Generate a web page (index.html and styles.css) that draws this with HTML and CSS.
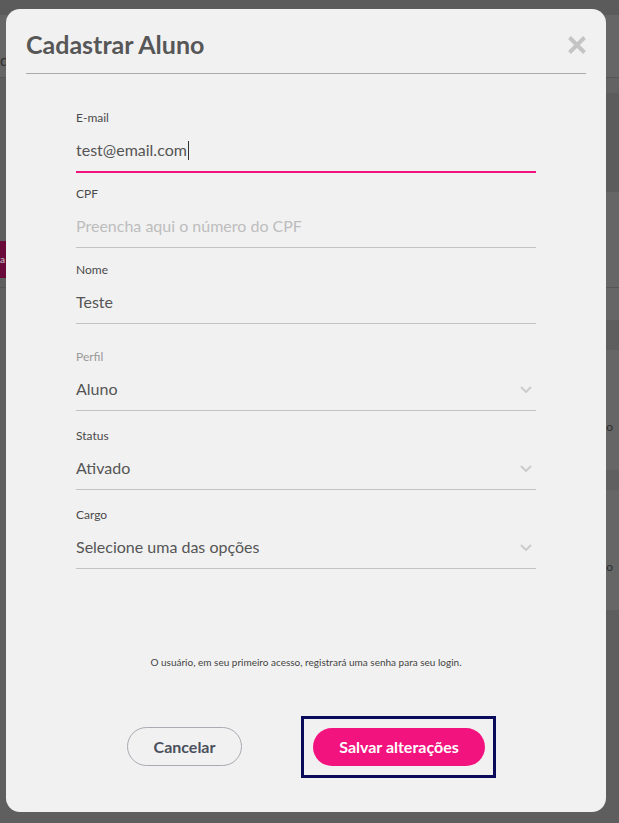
FILE: index.html
```html
<!DOCTYPE html>
<html lang="pt-BR">
<head>
<meta charset="utf-8">
<title>Cadastrar Aluno</title>
<link rel="stylesheet" href="styles.css">
</head>
<body>
<div class="page">
  <div class="col col-left">
    <div class="band b-top-l"></div>
    <div class="band b-head"><span class="cut-d">d</span></div>
    <div class="band b-dim-l"></div>
    <div class="band b-maroon"><span class="maroon-btn">a</span></div>
    <div class="band b-gap-l"></div>
    <div class="band b-rest-l"></div>
  </div>
  <div class="col col-right">
    <div class="band b-top-r"></div>
    <div class="band b-head"></div>
    <div class="band b-sub"></div>
    <div class="band b-dark"></div>
    <div class="band b-light"></div>
    <div class="band b-light2"></div>
    <div class="band b-dim"></div>
    <div class="band b-row"><span class="row-text">Acesso</span></div>
    <div class="band b-sep"></div>
    <div class="band b-row"><span class="row-text">Acesso</span></div>
    <div class="band b-rest-r"></div>
  </div>
</div>

<div class="modal">
  <div class="modal-header">
    <h1 class="modal-title">Cadastrar Aluno</h1>
    <button class="close-btn" aria-label="Fechar">
      <svg width="18" height="18" viewBox="0 0 18 18"><path d="M1.5 1.5 L16.5 16.5 M16.5 1.5 L1.5 16.5" stroke="#c4c4c4" stroke-width="4" fill="none"/></svg>
    </button>
  </div>

  <form class="form">
    <div class="input-group">
      <div class="field focused">
        <label class="label">E-mail</label>
        <div class="control"><span class="value">test@email.com</span><span class="caret"></span></div>
      </div>
      <div class="field">
        <label class="label">CPF</label>
        <div class="control"><span class="placeholder">Preencha aqui o número do CPF</span></div>
      </div>
      <div class="field">
        <label class="label">Nome</label>
        <div class="control"><span class="value">Teste</span></div>
      </div>
    </div>

    <div class="select-group">
      <div class="field">
        <label class="label label-muted">Perfil</label>
        <div class="control select"><span class="value">Aluno</span>
          <svg class="chevron" width="12" height="7" viewBox="0 0 12 7"><path d="M1 1 L6 6 L11 1" stroke="#cccccc" stroke-width="2" fill="none"/></svg>
        </div>
      </div>
      <div class="field">
        <label class="label">Status</label>
        <div class="control select"><span class="value">Ativado</span>
          <svg class="chevron" width="12" height="7" viewBox="0 0 12 7"><path d="M1 1 L6 6 L11 1" stroke="#cccccc" stroke-width="2" fill="none"/></svg>
        </div>
      </div>
      <div class="field">
        <label class="label">Cargo</label>
        <div class="control select"><span class="value">Selecione uma das opções</span>
          <svg class="chevron" width="12" height="7" viewBox="0 0 12 7"><path d="M1 1 L6 6 L11 1" stroke="#cccccc" stroke-width="2" fill="none"/></svg>
        </div>
      </div>
    </div>

    <p class="info">O usuário, em seu primeiro acesso, registrará uma senha para seu login.</p>

    <div class="actions">
      <button type="button" class="btn btn-outline">Cancelar</button>
      <span class="focus-ring"><button type="button" class="btn btn-primary">Salvar alterações</button></span>
    </div>
  </form>
</div>
</body>
</html>
```
FILE: styles.css
```css
* { box-sizing: border-box; }
html, body { margin: 0; padding: 0; }
body {
  width: 619px;
  height: 823px;
  overflow: hidden;
  background: #5e5e5e;
  font-family: Lato, "Liberation Sans", sans-serif;
  position: relative;
}

/* dimmed page behind the modal */
.page { display: flex; height: 823px; }
.col { display: flex; flex-direction: column; }
.col-left { width: 40px; }
.col-right { flex: 1; }
.band { flex: none; overflow: hidden; }
.b-top-l, .b-top-r { height: 15px; background: #5b5b5b; }
.b-head { height: 63px; background: #666; border-bottom: 1px solid #555; padding-top: 36px; }
.cut-d { display: block; font-size: 15px; color: #2f2f2f; line-height: 18px; }
.b-dim-l { height: 163px; background: #5e5e5e; }
.b-maroon { height: 37px; background: #6a0a3a; }
.maroon-btn { display: block; color: #b9a3ad; font-weight: 700; font-size: 10px; line-height: 37px; }
.b-gap-l { height: 10px; background: #5e5e5e; border-bottom: 1px solid #555; }
.b-rest-l { flex: 1; background: #5f5f5f; }
.b-sub { height: 15px; background: #636363; }
.b-dark { height: 99px; background: #5c5c5c; }
.b-light { height: 96px; background: #666; border-bottom: 1px solid #555; }
.b-light2 { height: 32px; background: #666; }
.b-dim { height: 30px; background: #5e5e5e; }
.b-row { height: 120px; background: #666; display: flex; justify-content: flex-end; padding: 69px 6px 0 0; }
.row-text { font-size: 12px; color: #2e2e2e; line-height: 16px; }
.b-sep { height: 20px; background: #606060; }
.b-rest-r { flex: 1; background: #5e5e5e; }

/* modal */
.modal {
  position: absolute;
  top: 9px;
  left: 6px;
  width: 600px;
  height: 803px;
  background: #f1f1f1;
  border-radius: 14px;
  padding: 0 20px;
}
.modal-header {
  display: flex;
  align-items: flex-start;
  justify-content: space-between;
  padding-top: 20px;
  padding-bottom: 14px;
  border-bottom: 1px solid #aaaaaa;
}
.modal-title {
  margin: 0;
  font-size: 25px;
  line-height: 30px;
  font-weight: 700;
  color: #575757;
}
.close-btn {
  border: 0;
  background: none;
  padding: 0;
  margin: 7px 0 0 0;
  width: 18px;
  height: 18px;
  display: block;
}
.close-btn svg { display: block; }

.form { width: 460px; margin: 0 auto; padding-top: 36px; }
.input-group { display: flex; flex-direction: column; gap: 14px; }
.select-group { display: flex; flex-direction: column; gap: 17px; padding-top: 25px; }

.label {
  display: block;
  font-size: 12px;
  line-height: 16px;
  color: #4a4a4a;
}
.label-muted { color: #999; }
.control {
  display: flex;
  align-items: center;
  height: 46px;
  padding: 8px 4px 5px 0;
  border-bottom: 1px solid #c2c2c2;
  font-size: 16px;
  line-height: 32px;
}
.focused .control { border-bottom-color: #f0137d; box-shadow: 0 1px 0 #f0137d; }
.value { color: #555; }
.placeholder { color: #bdbdbd; }
.caret { display: inline-block; width: 1px; height: 19px; background: #333; margin-left: 1px; }
.select { justify-content: space-between; }
.chevron { display: block; }

.info {
  margin: 86px 0 0 0;
  text-align: center;
  font-size: 10px;
  line-height: 14px;
  color: #444;
}
.actions {
  display: flex;
  justify-content: center;
  align-items: center;
  gap: 71px;
  margin-top: 58px;
}
.btn {
  font-family: Lato, "Liberation Sans", sans-serif;
  font-weight: 700;
  font-size: 16px;
  border-radius: 20px;
  cursor: pointer;
}
.btn-outline {
  width: 115px;
  height: 39px;
  background: transparent;
  border: 1px solid #a9abb2;
  color: #4a505c;
}
.focus-ring {
  display: flex;
  margin: -12px -11px -12px -12px;
  padding: 9px 8px 9px 9px;
  border: 3px solid #0b0b5c;
}
.btn-primary {
  width: 172px;
  height: 38px;
  background: #f3137e;
  border: 0;
  color: #fff;
  outline: none;
}
```
